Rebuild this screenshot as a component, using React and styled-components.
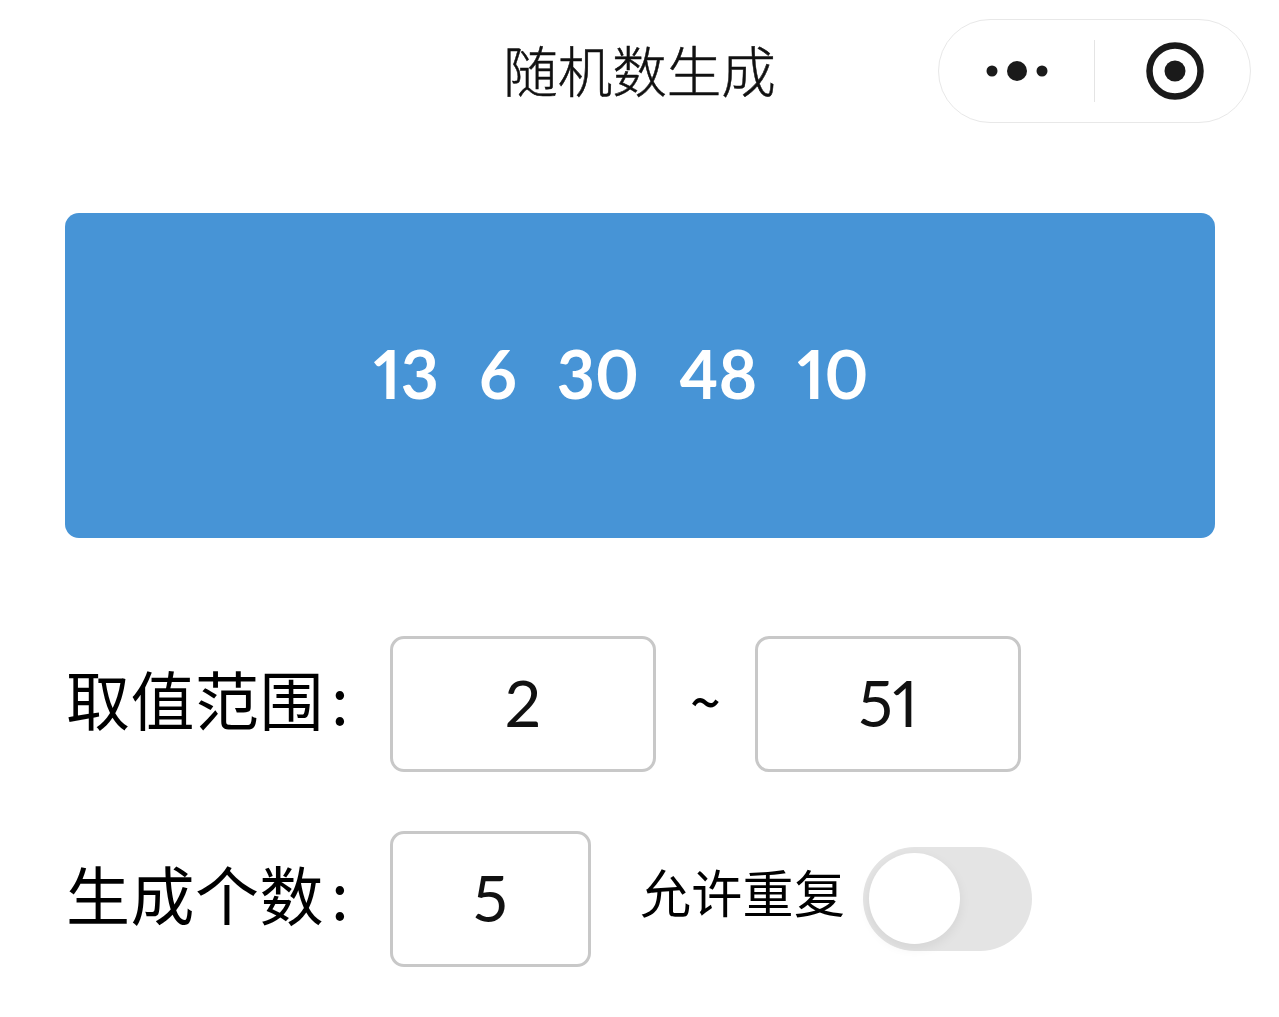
import styled, { createGlobalStyle } from 'styled-components'

const GlobalStyle = createGlobalStyle`
  html, body {
    margin: 0;
    padding: 0;
    background: #fff;
  }
  body {
    font-family: "Lato", "Noto Sans CJK SC", sans-serif;
    color: #000;
  }
`

const Page = styled.div`
  width: 1279px;
  height: 1017px;
  overflow: hidden;
  background: #fff;
`

const NavBar = styled.div`
  display: grid;
  grid-template-columns: 1fr auto 1fr;
  align-items: center;
  height: 104px;
  padding: 19px 28px 0 0;
`

const Title = styled.h1`
  grid-column: 2;
  margin: -4px 0 0 28px;
  font-family: "Noto Sans CJK SC", sans-serif;
  font-size: 54.5px;
  line-height: 104px;
  font-weight: 300;
  -webkit-text-stroke: 0.5px #111;
  color: #111;
`

const Capsule = styled.div`
  grid-column: 3;
  justify-self: end;
  box-sizing: border-box;
  width: 313px;
  height: 104px;
  display: flex;
  align-items: center;
  border: 1.5px solid #e8e8e8;
  border-radius: 52px;
  background: #fff;
`

const MoreSide = styled.div`
  width: 155px;
  display: flex;
  align-items: center;
  justify-content: center;
`

const RecordSide = styled.div`
  flex: 1;
  display: flex;
  align-items: center;
  justify-content: center;
  padding-left: 5px;
`

const Divider = styled.div`
  width: 1px;
  height: 62px;
  background: #e4e4e4;
`

const ResultCard = styled.div`
  margin: 90px 64px 0 65px;
  height: 325px;
  box-sizing: border-box;
  padding: 0 38px 5px 0;
  display: flex;
  align-items: center;
  justify-content: center;
  gap: 40px;
  background: #4794d6;
  border-radius: 14px;
  color: #fff;
  font-family: "Lato", sans-serif;
  font-size: 66px;
  font-weight: 700;
  font-variant-numeric: proportional-nums;
`

const Form = styled.div`
  display: flex;
  flex-direction: column;
  gap: 59px;
  margin-top: 98px;
  padding-left: 66px;
`

const Row = styled.div`
  display: flex;
  align-items: center;
  height: 136px;
`

const Label = styled.div`
  width: 324px;
  display: flex;
  font-family: "Noto Sans CJK SC", sans-serif;
  font-size: 64px;
  letter-spacing: 0.5px;
  margin-top: -14px;
  color: #000;
`

const Colon = styled.span`
  margin-left: 7px;
`

const Field = styled.div`
  box-sizing: border-box;
  width: ${props => props.width}px;
  height: 136px;
  padding-bottom: 3px;
  display: flex;
  align-items: center;
  justify-content: center;
  border: 3px solid #c8c8c8;
  border-radius: 14px;
  font-family: "Lato", sans-serif;
  font-size: 64px;
  font-variant-numeric: proportional-nums;
  color: #111;
`

const Tilde = styled.div`
  width: 99px;
  text-align: center;
  font-family: "Noto Sans CJK SC", sans-serif;
  font-size: 54px;
  font-weight: 500;
  margin-top: -10px;
`

const SwitchLabel = styled.div`
  margin-left: 49px;
  font-family: "Noto Sans CJK SC", sans-serif;
  font-size: 51px;
  letter-spacing: 0.3px;
  margin-top: -16px;
  color: #000;
`

const Switch = styled.div`
  position: relative;
  margin-left: 18px;
  width: 169px;
  height: 104px;
  border-radius: 52px;
  background: #e4e4e4;
`

const Knob = styled.div`
  position: absolute;
  left: 6px;
  top: 6px;
  width: 91px;
  height: 91px;
  border-radius: 50%;
  background: #fff;
  box-shadow: 0 4px 12px rgba(0, 0, 0, 0.07);
`

const numbers = [13, 6, 30, 48, 10]

const App = () => {
  return (
    <Page>
      <GlobalStyle />
      <NavBar>
        <Title>随机数生成</Title>
        <Capsule>
          <MoreSide>
            <svg width="64" height="24" viewBox="0 0 64 24">
              <circle cx="7" cy="12" r="5.5" fill="#1a1a1a" />
              <circle cx="32" cy="12" r="10" fill="#1a1a1a" />
              <circle cx="57" cy="12" r="5.5" fill="#1a1a1a" />
            </svg>
          </MoreSide>
          <Divider />
          <RecordSide>
            <svg width="58" height="58" viewBox="0 0 58 58">
              <circle cx="29" cy="29" r="25.5" fill="none" stroke="#1a1a1a" strokeWidth="6.5" />
              <circle cx="29" cy="29" r="10.5" fill="#1a1a1a" />
            </svg>
          </RecordSide>
        </Capsule>
      </NavBar>
      <ResultCard>
        {numbers.map((n, i) => <span key={i}>{n}</span>)}
      </ResultCard>
      <Form>
        <Row>
          <Label>取值范围<Colon>:</Colon></Label>
          <Field width={266}>2</Field>
          <Tilde>~</Tilde>
          <Field width={266}>51</Field>
        </Row>
        <Row>
          <Label>生成个数<Colon>:</Colon></Label>
          <Field width={201}>5</Field>
          <SwitchLabel>允许重复</SwitchLabel>
          <Switch><Knob /></Switch>
        </Row>
      </Form>
    </Page>
  )
}

export default App
